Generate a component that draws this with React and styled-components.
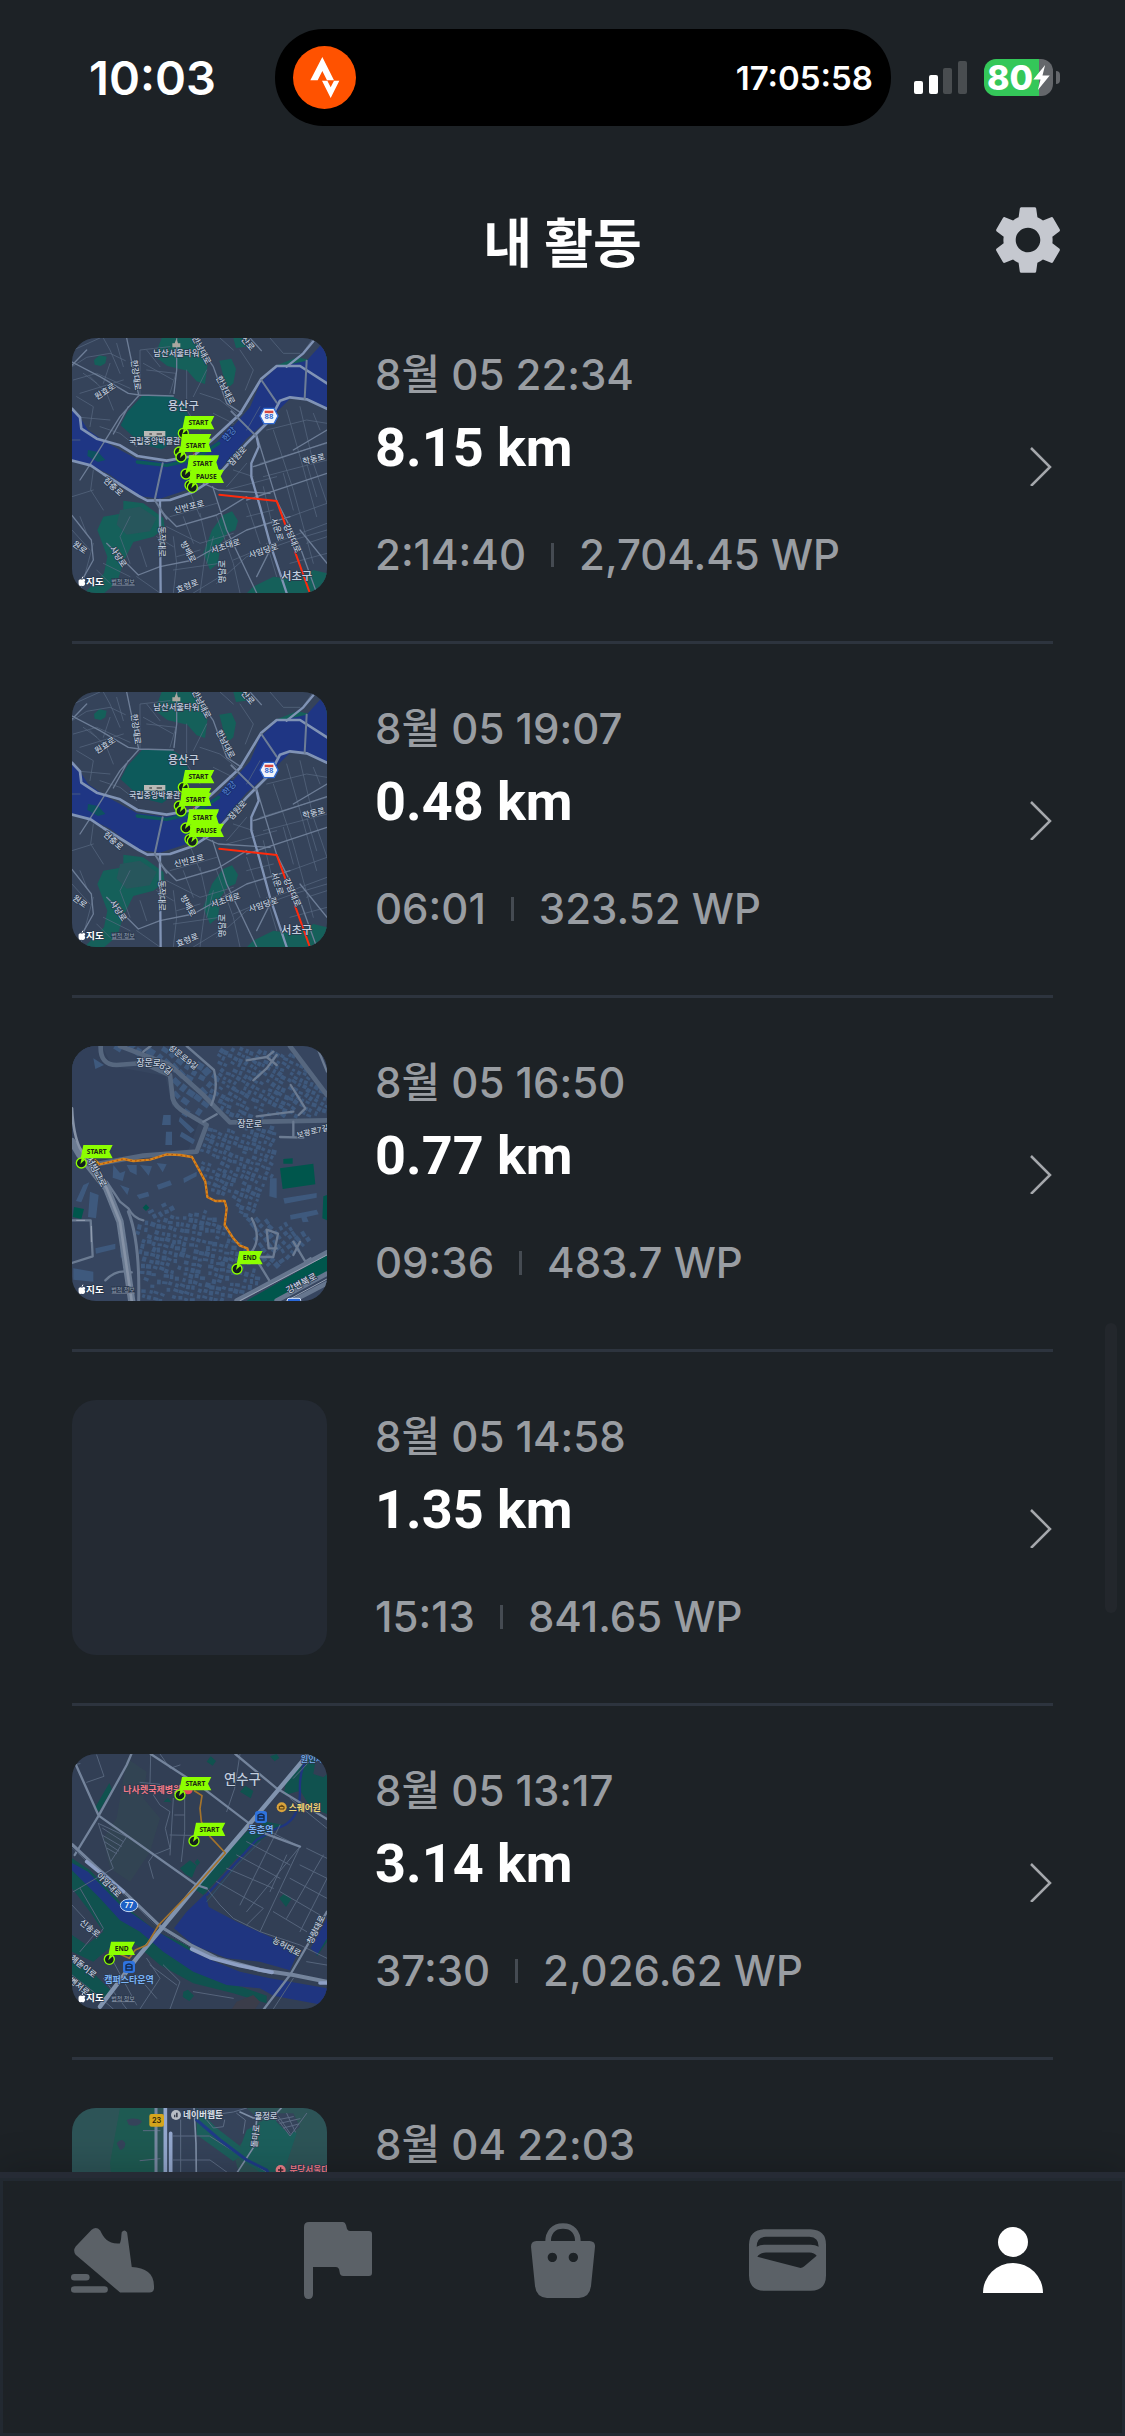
import React from "react";
import styled, { createGlobalStyle } from "styled-components";
import { MdSettings } from "react-icons/md";

const color = {
  bg: "#1d2226",
  panel: "#242a33",
  line: "#2d343e",
  muted: "#999da2",
  faint: "#5b6167",
  lime: "#8cff00",
  orange: "#ff5200",
  green: "#34c759",
};
const sans = `Inter, "Noto Sans CJK KR", sans-serif`;

const GlobalStyle = createGlobalStyle`
  * { box-sizing: border-box; }
  body { margin: 0; background: ${color.bg}; color: #fff; font-family: ${sans}; }
  h1, p, ul { margin: 0; padding: 0; }
  ul { list-style: none; }
  a { color: inherit; text-decoration: none; }
`;

const Screen = styled.div`
  position: relative;
  display: flex;
  flex-direction: column;
  height: 100vh;
  overflow: hidden;
`;

/* status bar */
const StatusBar = styled.div`
  display: grid;
  grid-template-columns: 275fr 616fr 234fr;
  align-items: center;
  flex: none;
  padding-top: 29px;
`;
const Clock = styled.time`
  padding-left: 30px;
  text-align: center;
  font-size: 47px;
  line-height: 56px;
  font-weight: 600;
`;
const Island = styled.div`
  display: flex;
  align-items: center;
  justify-content: space-between;
  height: 97px;
  padding: 0 18px;
  border-radius: 48px;
  background: #000;
`;
const Timer = styled.time`
  font-size: 33px;
  line-height: 40px;
  font-weight: 600;
`;
const StatusIcons = styled.div`
  display: flex;
  align-items: center;
  gap: 17px;
  padding-left: 23px;
`;
const Battery = styled.div`
  display: flex;
  align-items: center;
  gap: 3px;
`;
const BatteryBody = styled.div`
  display: flex;
  align-items: center;
  justify-content: center;
  width: 69px;
  height: 37px;
  border-radius: 12px;
  background: linear-gradient(90deg, ${color.green} 80%, #64676b 80%);
  font-size: 34px;
  line-height: 37px;
  font-weight: 800;
`;
const BatteryTip = styled.div`
  width: 4px;
  height: 13px;
  border-radius: 0 4px 4px 0;
  background: #64676b;
`;

/* header */
const Header = styled.header`
  display: grid;
  grid-template-columns: 1fr auto 1fr;
  align-items: center;
  flex: none;
  height: 164px;
  padding: 64px 56px 0;
`;
const Title = styled.h1`
  grid-column: 2;
  font-family: "Noto Sans CJK KR", sans-serif;
  font-size: 53px;
  line-height: 72px;
  font-weight: 600;
`;
const IconButton = styled.button`
  display: flex;
  justify-self: end;
  padding: 0;
  border: 0;
  background: none;
  color: #c5c8cf;
`;

/* list */
const List = styled.ul`
  flex: 1;
  min-height: 0;
  padding: 0 72px;
  overflow-y: auto;
  scrollbar-width: none;
`;
const Item = styled.li`
  border-bottom: 3px solid ${color.line};
`;
const Row = styled.a`
  display: flex;
  align-items: center;
  gap: 48px;
  padding: 48px 0;
`;
const Thumb = styled.div`
  flex: none;
  width: 255px;
  height: 255px;
  overflow: hidden;
  border-radius: 24px;
  background: ${color.panel};
  svg { display: block; }
`;
const Details = styled.div`
  flex: 1;
  display: flex;
  flex-direction: column;
  align-self: stretch;
  padding-top: 12px;
`;
const DateLine = styled.time`
  font-size: 42px;
  line-height: 50px;
  font-weight: 500;
  color: ${color.muted};
`;
const Distance = styled.strong`
  margin-top: 12px;
  font-family: Roboto, "Noto Sans CJK KR", sans-serif;
  font-size: 54px;
  line-height: 72px;
  font-weight: 700;
`;
const Meta = styled.div`
  display: flex;
  align-items: center;
  gap: 25px;
  margin-top: 46px;
  font-size: 42px;
  line-height: 50px;
  font-weight: 500;
  color: ${color.muted};
`;
const Divider = styled.span`
  width: 3px;
  height: 24px;
  background: #454b52;
`;
const ScrollThumb = styled.div`
  position: absolute;
  right: 8px;
  top: 54.3%;
  width: 12px;
  height: 290px;
  border-radius: 6px;
  background: #23272c;
`;

/* tab bar */
const TabBar = styled.nav`
  display: grid;
  grid-template-columns: repeat(5, 1fr);
  flex: none;
  height: 264px;
  border-top: 6px solid #262b35;
  box-shadow: 0 -4px 36px rgba(0, 0, 0, 0.2), inset 0 0 0 3px #222931;
  background: ${color.bg};
  position: relative;
`;
const Tab = styled.a`
  display: flex;
  align-items: center;
  justify-content: center;
  height: 164px;
  color: ${(p) => (p.$active ? "#fff" : color.faint)};
`;

/* ---------- map drawing ---------- */
const Roads = ({ d, c = "#61718a", w = 3 }) => (
  <path d={d} fill="none" stroke={c} strokeWidth={w} strokeLinejoin="round" strokeLinecap="round" />
);
const Label = ({ x, y, r = 0, s = 25, c = "#c3cede", w = 500, o = "#29374c", children }) => (
  <text
    x={x} y={y} transform={`rotate(${r} ${x} ${y})`} textAnchor="middle" dominantBaseline="central"
    fontFamily='Inter, "Noto Sans CJK KR", sans-serif' fontSize={s} fontWeight={w}
    fill={c} stroke={o} strokeWidth="4" paintOrder="stroke"
  >
    {children}
  </text>
);
const Pin = ({ x, y }) => (
  <g>
    <circle cx={x} cy={y} r="15" fill="#14201c" stroke={color.lime} strokeWidth="4" />
    <path d={`M${x - 3} ${y + 3} L${x + 1} ${y - 14} L${x + 11} ${y - 10}Z`} fill={color.lime} />
  </g>
);
const Flag = ({ x, y, w = 88, label }) => (
  <g>
    <path d={`M${x} ${y}h${w}l-10 20l10 20h${-w - 8}z`} fill={color.lime} />
    <text x={x + w / 2 - 4} y={y + 20} textAnchor="middle" dominantBaseline="central" fontFamily='"Noto Sans", sans-serif' fontSize="20" fontWeight="700" fill="#1c2a12">
      {label}
    </text>
  </g>
);
const MapCredit = ({ y }) => (
  <g>
    <path d={`M56 ${y - 2}q5-6 10-2q6-4 10 1q-5 5 0 11q-4 9-8 7q-4-2-8 0q-6-2-4-17zM65 ${y - 6}q0-6 5-8q0 6-5 8z`} fill="#fff" />
    <Label x={105} y={y} s={29} c="#fff" w={700}>지도</Label>
    <Label x={189} y={y + 2} s={18} c="#8793a5">법적 정보</Label>
    <path d={`M155 ${y + 13}h69`} stroke="#8793a5" strokeWidth="2" />
  </g>
);
const MapFrame = ({ y, label, children }) => (
  <svg width="255" height="255" viewBox={`36 ${y} 765 765`} role="img" aria-label={label}>
    {children}
  </svg>
);

const SeoulMap = () => (
  <MapFrame y={24} label="용산구">
    <rect x="36" y="24" width="765" height="765" fill="#35435a" />
    <g fill="#15605a">
      <path d="M305 24h90l30 28l18 50l-8 60l-25-8l-28-32l-60-14l-38-30z" />
      <path d="M478 92l36-6l14 30l-8 44l-16 14l-14-36z M520 24h44l-6 26l-30 4z" />
      <path d="M246 198l84-2l48 26l8 52l-20 40l-60 44l-62-16l-62-56l20-40z" fill="#0d5a5b" />
      <path d="M102 90l16-14l22 4l-4 20l-14 8l-18-4z M640 110l70 2l40 24l51 16v-80l-40 20l-50-10z" />
      <path d="M190 512l60 8l60 44l4 30l-34 26l-60 16l-30 60l-18 60l-40 34h-60l60-60l10-50l-30-80l18-40l60-10z" />
      <path d="M488 556l28-12l18 28l-8 28l-24 10l-20 30l-8 60l-24 20l-20-50l26-70z M640 740l70 10l50-30l41 10v59h-240l20-20z" />
    </g>
    <path d="M180 540l60-10l50 34l-20 40l-70 10l-30-30z" fill="#27565c" />
    <path d="M36 236L60 262L84 300L140 338L232 388L320 398L400 380L470 336L520 288L570 232L600 160L650 112L740 92L801 24V240L740 206L690 206L640 256L560 326L480 420L380 480L300 506L236 498L150 434L92 406L36 392Z" fill="#1f3684" />
    <path d="M84 360l30 6l22 24l-22 6l-32-18z" fill="#0d5260" />
    <Roads d="M232 396L320 406L402 388L476 340" c="#0d5a5b" w={10} />
    <Roads
      w={2}
      c="#5a6b84"
      d="M40 60L120 24M36 110L80 82L150 70L196 92M130 24L150 60L180 130M90 140L140 190L160 240M60 190L190 150M40 150L110 130L210 175M150 270L60 262M240 194V60L330 50M330 190L348 130L260 120M380 120V240L420 300M420 190L480 210L530 250M540 60L580 120L556 180M440 120L400 200M100 420L92 480L130 540M36 500L100 480M210 560L180 620L210 700M320 590L420 640L520 610M340 620L350 700L340 789M420 550L440 640L420 789M470 560L520 700L540 789M560 520L600 640M380 460L420 560M330 560L470 520M470 760L560 680L700 630L801 600M520 690L640 640L801 580M600 400L700 370L801 340M610 440L801 390M620 300L740 270L801 280M720 230L760 400L801 520M680 240L720 380L770 560M640 300L700 480L760 700M560 400L500 470M500 480L650 440M230 740L300 789M100 640L60 789M36 600L90 660M130 700L210 740M690 560L801 520M740 640L801 620M560 560L640 540M520 420L580 440M760 24L720 80M630 24L670 70L720 70M480 24L520 60M60 330L36 330M780 300L760 250M340 720L480 700M400 789L480 740M50 200L100 230L90 290M120 290L180 310L230 350M70 130L110 160M150 100L130 160M170 40L190 110M250 100L340 150M260 60L300 110M400 260L440 290M460 250L520 280M600 230L560 300M610 470L640 600M670 430L700 540M740 400L770 500M620 640L650 740M690 700L801 670M370 560L400 640M290 620L340 650M240 650L260 710M460 620L440 700M350 680L420 660M60 560L80 610M110 720L150 760"
    />
    <Roads
      w={4}
      c="#6d7d96"
      d="M36 106L80 60M36 96L120 140L205 190L238 195L340 198M238 195L180 260L90 404L60 450M200 24L236 195M160 312L205 230M400 24L460 110L500 220L545 250M350 24V120L342 190M570 24L604 62M36 556L94 630L100 690L72 740M300 540L350 590L470 555L560 500M458 470L500 600L590 789M560 510L801 430M300 710L400 690L560 600L690 560M235 735L300 710M140 640L235 735M590 315L650 512L720 650L770 789M590 740L640 640M700 360L801 300M580 410L801 338M720 600L801 700M430 460L475 480L630 490"
    />
    <Roads w={8} c="#8093b5" d="M36 236L60 262L64 296L110 326L180 346L232 378L320 392L400 378L456 330L540 252L604 146L650 108L720 108L801 160M36 392L92 406L130 432L236 498L262 512L330 510L400 486L470 440L560 340L630 270L660 212L690 202L740 208L801 236" />
    <Roads w={7} c="#8093b5" d="M680 110L730 70L760 34M590 320L596 350L574 400L574 440L600 530L630 640L680 789M300 510V570L302 789" />
    <Roads w={6} c="#6d7d96" d="M308 400L284 510L320 566M604 150L650 218M740 92L734 206M514 244L590 320" />
    <Roads w={3} c="#8b2f2b" d="M395 340L408 400L435 460" />
    <Roads w={6} c="#ff2a0c" d="M478 494L650 513L676 584M706 668L748 785" />
    <Roads w={3} c="#c43322" d="M676 584L706 668" />
    <path d="M349 26l5 14h7v12h-24V40h7z" fill="#aaa79f" />
    <rect x="252" y="303" width="64" height="17" fill="#b9b9b6" />
    <path d="M268 312h8M290 312h16" stroke="#555" strokeWidth="5" />
    <Label x={349} y={69} s={25}>남산서울타워</Label>
    <Label x={425} y={60} r={62}>한남대로</Label>
    <Label x={564} y={40} r={50}>산로</Label>
    <Label x={228} y={135} r={82}>한강대로</Label>
    <Label x={135} y={184} r={-33}>원효로</Label>
    <Label x={497} y={180} r={62}>한남대로</Label>
    <Label x={370} y={228} s={34}>용산구</Label>
    <Label x={284} y={333} s={24}>국립중앙박물관</Label>
    <Label x={508} y={313} r={-48} s={26} c="#527ecb" o="#142b68">한강</Label>
    <Label x={532} y={378} r={-48}>잠원로</Label>
    <Label x={761} y={387} r={-14}>학동로</Label>
    <Label x={160} y={470} r={42}>현충로</Label>
    <Label x={387} y={530} r={-14}>신반포로</Label>
    <Label x={175} y={680} r={56}>사당로</Label>
    <Label x={60} y={652} r={36}>원로</Label>
    <Label x={307} y={635} r={90}>동작대로</Label>
    <Label x={385} y={665} r={62}>방배로</Label>
    <Label x={497} y={648} r={-18}>서초대로</Label>
    <Label x={610} y={662} r={-18}>사임당로</Label>
    <Label x={652} y={598} r={72}>서운로</Label>
    <Label x={697} y={625} r={66}>강남대로</Label>
    <Label x={485} y={725} r={-90}>명달로</Label>
    <Label x={382} y={768} r={-22}>효령로</Label>
    <Label x={710} y={737} s={34}>서초구</Label>
    <path d="M600 258l12-23h30l12 23l-12 23h-30z" fill="#f1f4fb" stroke="#2f68cf" strokeWidth="4" />
    <rect x="614" y="242" width="26" height="8" fill="#d7483f" />
    <Label x={627} y={262} s={20} c="#2f68cf" w={800} o="#f1f4fb">88</Label>
    <Pin x={370} y={310} />
    <Flag x={375} y={258} label="START" />
    <Pin x={358} y={366} />
    <Pin x={363} y={381} />
    <path d="M366 312h88l-10 20l10 34h-94z" fill={color.lime} />
    <Flag x={368} y={326} w={86} label="START" />
    <Pin x={378} y={432} />
    <Pin x={390} y={466} />
    <Pin x={397} y={472} />
    <Flag x={394} y={419} w={98} label="PAUSE" />
    <path d="M387 376h90l-8 20l8 26h-94z" fill={color.lime} />
    <Flag x={388} y={380} w={88} label="START" />
    <MapCredit y={753} />
  </MapFrame>
);

const inside = (pts, x, y) => {
  let hit = false;
  for (let i = 0, j = pts.length - 1; i < pts.length; j = i++) {
    const [xi, yi] = pts[i];
    const [xj, yj] = pts[j];
    if (yi > y !== yj > y && x < ((xj - xi) * (y - yi)) / (yj - yi) + xi) hit = !hit;
  }
  return hit;
};
const houses = (pts, angle, step, seed) => {
  const out = [];
  let s = seed;
  const rnd = () => (s = (s * 16807) % 2147483647) / 2147483647;
  const a = (angle * Math.PI) / 180;
  for (let v = -900; v < 900; v += step)
    for (let u = -900; u < 900; u += step) {
      const x = 420 + u * Math.cos(a) - v * Math.sin(a) + (rnd() - 0.5) * 6;
      const y = 415 + u * Math.sin(a) + v * Math.cos(a) + (rnd() - 0.5) * 6;
      const w = step * (0.5 + rnd() * 0.4);
      const h = step * (0.45 + rnd() * 0.4);
      if (rnd() > 0.1 && inside(pts, x, y)) out.push({ x, y, w, h, r: angle + rnd() * 24 - 12 });
    }
  return out;
};
const blocks = [
  ...houses([[140, 33], [300, 33], [470, 110], [460, 200], [400, 260], [345, 200], [330, 120]], 38, 28, 11),
  ...houses([[470, 33], [690, 50], [801, 180], [801, 240], [530, 255], [440, 190], [475, 100]], 28, 17, 23),
  ...houses([[440, 280], [650, 275], [640, 420], [600, 500], [560, 560], [500, 480], [450, 470], [410, 360]], 20, 17, 37),
  ...houses([[230, 560], [440, 520], [500, 580], [570, 650], [600, 740], [500, 797], [250, 797]], 12, 18, 41),
  ...houses([[250, 520], [320, 490], [340, 520], [280, 560]], -25, 20, 53),
  ...houses([[560, 540], [660, 560], [760, 600], [700, 680], [620, 700]], 50, 20, 61),
];
const HillMap = () => (
  <MapFrame y={33} label="장문로">
    <rect x="36" y="33" width="765" height="765" fill="#36455f" />
    <path d="M36 33h90l30 60l160 30l20 90l80 50l-30 80l-160 20l-140 20l-50-60z" fill="#32405a" />
    <g fill="#3e597d">
      {blocks.map((b, i) => (
        <rect key={i} x={b.x - b.w / 2} y={b.y - b.h / 2} width={b.w} height={b.h} transform={`rotate(${b.r} ${b.x} ${b.y})`} />
      ))}
      <path d="M100 70l32 20l-26 12zM310 240h22v30h-26zM318 290h18v40h-20zM360 245l44 40l-12 10l-36-36zM365 290l40 24l-6 14l-40-24zM160 390l20 24l16-6l-8 30l-30-10zM200 390h30v30l-20-10zM240 390l36 4l-10 28zM290 384l30 4l-12 24zM180 450l28 10l-6 20zM230 480l34-10l4 14l-30 8zM290 450l40-14l6 14l-40 14zM370 430l40-20v14l-38 20zM70 450l18-8l-24 60l-16-4zM90 470l26 10l-8 70l-24-4zM106 640l60-14v16l-58 14zM180 630l22-6v40l-20 4zM40 700l60 10v30l-60-6zM670 490l100-16v14l-96 18zM630 430h20v60l-22-6zM690 540l80-16l6 14l-36 8l6 14l-18 2l-4-14l-32 6z" />
    </g>
    <g fill="#00564c">
      <path d="M660 400l100-14l6 62l-98 14zM670 372l28-2v16h-28zM42 516l30 6l-8 30l-26-6zM258 508l10 10l-10 10l-10-10zM790 484l11-4v76l-14-6z" />
      <path d="M560 797L801 660V720L660 797Z" />
    </g>
    <Roads w={14} c="#56677f" d="M122 33Q120 90 170 90L250 84L330 120L338 190Q344 215 380 235L440 270L410 350L250 362L118 386M180 33L330 90L430 180L510 262L801 256M690 33L801 180" />
    <Roads w={7} c="#6b7b92" d="M380 33L462 105Q476 160 454 210M430 260L470 238M560 76L620 66L650 90M580 136L620 100L650 60M620 66L640 50M692 150L736 220L716 240M590 244L700 230M660 306L730 308M700 260V306M575 550Q606 610 575 650L630 740M620 584L654 596L640 666H600M620 584L626 640H650M700 620L736 680L752 670M700 660L720 620M36 556H92L98 664L36 684M250 556Q220 550 205 520L180 500L140 440M136 736Q170 700 215 712M40 340L70 350M250 50L272 33M770 33L801 110" />
    <Roads w={22} c="#6b7b92" d="M36 320L60 360L140 460L180 560L215 797" />
    <Roads w={8} c="#8592a6" d="M36 220Q40 300 60 340L140 460L180 560L215 797" />
    <Roads w={9} c="#66768e" d="M205 530Q240 620 236 797" />
    <Roads w={14} c="#66768e" d="M530 797L801 652M650 797L801 716M700 797L801 744" />
    <Roads w={3} c="#97a2b4" d="M540 797L801 660M680 797L801 732M50 556H74M94 574V620" />
    <Roads w={7} c="#d9851b" d="M106 376L118 388L190 372L220 378L270 374L320 358L360 360L396 366L420 410L436 440L442 486L466 498L494 498L500 520L494 570L520 610L540 632L562 640L566 655" />
    <path d="M106 376L118 388L190 372L220 378L270 374L320 358L360 360L396 366L420 410L436 440L442 486L466 498L494 498L500 520L494 570L520 610L540 632L562 640" fill="none" stroke="#b4570f" strokeWidth="4" strokeDasharray="5 9" />
    <Label x={266} y={82} s={27}>장문로</Label>
    <Label x={318} y={100} r={38} s={27}>6길</Label>
    <Label x={370} y={66} r={38} s={24}>장문로9길</Label>
    <Label x={569} y={264} s={27}>장문로</Label>
    <Label x={758} y={290} r={-14} s={23}>보광로7길</Label>
    <Label x={110} y={410} r={62} s={27}>서빙고로</Label>
    <Label x={724} y={744} r={-28} s={27}>강변북로</Label>
    <rect x="682" y="790" width="40" height="12" rx="5" fill="#2867d8" stroke="#dce6fa" strokeWidth="3" />
    <Pin x={64} y={384} />
    <Flag x={70} y={330} label="START" />
    <Pin x={531} y={702} />
    <Flag x={538} y={648} w={70} label="END" />
    <MapCredit y={762} />
  </MapFrame>
);

const Station = ({ x, y }) => (
  <g>
    <rect x={x - 18} y={y - 18} width="36" height="36" rx="8" fill="#2f73de" />
    <path d={`M${x - 9} ${y + 9}v-14q9-8 18 0v14zM${x - 9} ${y}h18`} fill="none" stroke="#12284c" strokeWidth="4" />
  </g>
);
const CanalMap = () => (
  <MapFrame y={27} label="연수구">
    <rect x="36" y="27" width="765" height="765" fill="#323f55" />
    <path d="M200 40l60 40l-10 80l50 60l-30 100l-60 90l-60-40l-20-90l40-60z" fill="#35504f" opacity="0.3" />
    <g fill="#10524f">
      <path d="M36 340L90 376L180 470L290 560L380 600L470 700L620 752V775L520 745L400 715L300 660L230 600L170 590L100 650L36 620V570L80 600L130 560L90 500L36 430Z" />
      <path d="M680 100l60-73h30l-10 60l30 10l11-10v120l-50-20l-30-50l-50 14zM560 260l60-30l50 10l-60 40l-80 60l-100 110l-30-20zM104 190l44-76l8 20l-40 66zM36 650l60 30l60 60l-30 30l-90-70z" />
      <path d="M360 370l30-24l20 16l-14 36l-20-10zM404 352l8-10l8 10l-8 10zM658 460l14-14l22 16l-16 24zM540 140l16-18l24 16l-8 22zM440 50l12-16l16 14l-10 14zM310 170l14-12l10 14zM630 34l20-7l8 12l-14 10zM370 740l14-6l18 18l-14 16l-20-12zM760 600l41-70v60l-30 44z" />
    </g>
    <path d="M530 770l50-20l20 20l-20 30h-70z" fill="#3b3d4a" />
    <path d="M436 446L446 486L530 530L640 580L710 630L690 676L600 650L500 640L400 600L342 550L380 500Z" fill="#1f3580" />
    <path d="M36 354L84 380L180 480L290 558L380 612L440 640L540 680L630 700L801 730V782L640 752L600 730L500 720L400 680L310 620L240 560L180 526L120 460L36 376Z" fill="#1f3580" />
    <path d="M752 610l49-90v60l-30 50z" fill="#1f3580" />
    <Roads w={7} c="#1f3580" d="M746 27Q716 80 720 140Q720 230 650 250L590 284L440 450" />
    <Roads w={3} c="#56657c" d="M36 60L60 56M80 112L132 94L110 30M272 30L270 116M240 112L300 118L280 150L300 180L330 200L316 250L330 310L280 330L266 350L280 400M340 160L330 330M374 160V260L364 350M330 270L440 272M344 210H374M115 235L200 275L152 350L115 235M128 250L190 290M126 270L184 304M134 290L176 318M142 310L170 326M152 350L160 370L40 440M540 27L524 130L500 200M360 60L330 70L300 27M60 430L130 550L110 580M440 430L480 480L520 520L600 560L720 600L801 640M610 250L720 305L560 500M560 290L690 360M530 330L660 400M500 370L640 430M470 410L610 490L560 540M660 240L540 480M720 305L600 560M690 160L801 250M740 310L801 340M720 360L801 400M690 400L801 460M660 440L780 510M640 500L740 560M680 330L630 440M790 330L680 520M801 400L720 560M770 27L700 100M36 480L110 560L60 620M130 700L200 792M240 792L300 700L260 640M160 650L230 780M330 792L360 710L310 660M230 690L290 760M270 660L350 720M400 740L520 760M800 660L740 650M640 792L700 700M36 690L100 740L160 792" />
    <Roads w={7} c="#74849c" d="M48 60L116 212L200 60L214 27M116 212L44 330M116 212L410 420L440 430M272 27L430 130L600 260L720 305M526 27L650 130L801 222M801 500L690 690L612 792" />
    <Roads w={12} c="#74849c" d="M36 300L100 360L190 440L300 545L390 600L470 640L600 675L700 690L801 710" />
    <Roads w={3} c="#2f3d55" d="M36 306L100 366L190 446L300 551L390 606L470 646" />
    <Roads w={11} c="#8d9fc4" d="M80 350L190 440M395 612L450 638L540 662L636 682M780 714H801" />
    <Roads w={13} c="#8093ae" d="M745 27L600 200L412 420L305 550L230 640L120 785" />
    <Roads w={2} c="#32617a" d="M440 470L530 360L600 290" />
    <Roads w={5} c="#a4732b" d="M404 138L426 152L420 190L424 230L450 275L496 324L412 420L296 540L260 600L226 615L208 640L180 628" />
    <Label x={277} y={132} s={27} c="#f27a86" w={600}>나사렛국제병원</Label>
    <Label x={547} y={103} s={40}>연수구</Label>
    <Label x={756} y={42} s={25} c="#7ab3f5">원인재</Label>
    <Label x={603} y={252} s={27} c="#7ab3f5" w={600}>동춘역</Label>
    <Station x={603} y={216} />
    <circle cx="665" cy="187" r="15" fill="#d9a23c" />
    <path d="M658 184h14v8h-14zM661 184q4-8 8 0" fill="none" stroke="#51380f" strokeWidth="3" />
    <Label x={734} y={188} s={26} c="#f3d873" w={600}>스퀘어원</Label>
    <Label x={147} y={420} r={45} s={25}>아암대로</Label>
    <ellipse cx="207" cy="481" rx="26" ry="19" fill="#1d5fc4" stroke="#c8d8f2" strokeWidth="3" />
    <Label x={207} y={482} s={22} c="#fff" o="#1d5fc4" w={600}>77</Label>
    <Label x={90} y={550} r={38}>신송로</Label>
    <Label x={70} y={664} r={38}>해돋이로</Label>
    <Label x={58} y={724} r={38}>벤처로</Label>
    <Label x={680} y={605} r={28}>능허대로</Label>
    <Label x={768} y={554} r={-64}>청량대로</Label>
    <Label x={207} y={704} s={27} c="#7ab3f5" w={600}>캠퍼스타운역</Label>
    <Station x={207} y={666} />
    <circle cx="384" cy="134" r="14" fill="#e2485c" />
    <Pin x={360} y={150} />
    <Flag x={366} y={96} label="START" />
    <Pin x={402} y={288} />
    <Flag x={408} y={233} label="START" />
    <Pin x={148} y={643} />
    <Flag x={153} y={590} w={72} label="END" />
    <MapCredit y={757} />
  </MapFrame>
);

const ForestMap = () => (
  <MapFrame y={24} label="돌마로">
    <rect x="36" y="24" width="765" height="765" fill="#2d5457" />
    <path d="M180 24h110v200l30 565h-120l-30-400l-20-200z" fill="#1e5a52" />
    <path d="M318 24H560L600 60L560 110L520 160L540 230L520 789H318Z" fill="#35435a" />
    <path d="M410 24l60 60l90 70l-40 30l-110-80z M560 90l90-50l60 60l-30 90l-60 40l-90-60z" fill="#1c5f5c" />
    <path d="M640 40l60 0l20 40l-30 26l-40-40z" fill="#35435a" />
    <path d="M200 60q30-10 46 4q-10 20-40 10zM170 130q16-20 26 0q0 18-16 20z" fill="#35435a" />
    <Roads w={3} c="#5c6b83" d="M362 60V216M340 108H448L620 216M340 180H450L500 216M420 50L520 36L560 24M550 100L556 60L530 40M440 60L460 84L490 80L494 60M640 40L690 108L740 40M650 60L700 50M660 70L720 56M670 84L716 72M656 50L690 100M680 40L706 96M250 92H300M240 182L300 176" />
    <Roads w={5} c="#7e8ea6" d="M402 24L408 130L414 789M540 36L580 54L640 50L664 24M590 60L582 140L530 220" />
    <Roads w={9} c="#1f3b87" d="M410 60L480 120L560 180L620 210L660 280" />
    <Roads w={9} c="#7687a0" d="M288 24V789" />
    <Roads w={11} c="#93a7cd" d="M316 24V789M332 100V789" />
    <rect x="268" y="42" width="44" height="38" rx="6" fill="#d5a51c" />
    <Label x={290} y={61} s={22} c="#2a2208" o="#d5a51c" w={600}>23</Label>
    <circle cx="348" cy="45" r="15" fill="#b6bcc4" />
    <path d="M342 52v-8h4v8zM348 52v-14h5v14z" fill="#3b4250" />
    <Label x={429} y={46} s={26} c="#dde2ea" w={600}>네이버웹툰</Label>
    <Label x={618} y={49}>불정로</Label>
    <Label x={586} y={108} r={-84}>돌마로</Label>
    <circle cx="662" cy="210" r="15" fill="#ee7f88" />
    <path d="M662 202v16M654 210h16" stroke="#3a2430" strokeWidth="4" />
    <Label x={748} y={211} s={26} c="#f27a86" w={600}>분당서울대</Label>
  </MapFrame>
);

/* ---------- icons ---------- */
const Strava = () => (
  <svg width="63" height="63" viewBox="39 63 189 189" role="img" aria-label="Strava">
    <circle cx="133.500" cy="157.500" r="94.500" fill={color.orange} />
    <path d="M127 96L91 166H113L127 138L141 166H162ZM126 167L152 219L178 167H162L152 187L142 167Z" fill="#fff" />
  </svg>
);
const Signal = () => (
  <svg width="53" height="33" viewBox="0 0 53 33" aria-hidden="true">
    <g fill="#fff"><rect y="20" width="9" height="13" rx="2" /><rect x="15" y="14" width="9" height="19" rx="2" /></g>
    <g fill="#494d50"><rect x="29" y="7" width="9" height="26" rx="2" /><rect x="44" width="9" height="33" rx="2" /></g>
  </svg>
);
const Bolt = () => (
  <svg width="17" height="25" viewBox="464 158 50 76" aria-hidden="true">
    <path d="M500 158L464 202H486L478 234L514 190H492Z" fill="#fff" />
  </svg>
);
const Chevron = () => (
  <svg width="24" height="40" viewBox="0 0 24 40" aria-hidden="true">
    <path d="M2 2L21 21L2 40" fill="none" stroke="#a5a8ac" strokeWidth="2.5" />
  </svg>
);
const Shoe = () => (
  <svg width="83" height="65" viewBox="36 48 250 195" fill="currentColor">
    <path d="M98 53Q112 42 124 55C134 78 150 97 183 94C188 86 187 70 189 60Q197 50 205 61L219 165C260 167 286 184 286 222V230Q285 242 272 242H184L50 128Q41 116 50 103Z" />
    <rect x="36" y="186" width="56" height="20" rx="10" />
    <rect x="36" y="223" width="111" height="20" rx="10" />
  </svg>
);
const FlagIcon = () => (
  <svg width="68" height="77" viewBox="0 0 68 77" fill="currentColor">
    <path d="M5 0H39Q41 0 42 3L43 7Q44 9 46 9H65Q68 9 68 12V51Q68 54 65 54H39Q37 54 36 52L35 47Q34 45 32 45H9V72Q9 77 4.500 77Q0 77 0 72V5Q0 0 5 0Z" />
  </svg>
);
const Bag = () => (
  <svg width="64" height="75" viewBox="88 63 192 225" fill="currentColor">
    <path d="M139 122C139 90 156 72 184 72S229 90 229 122" fill="none" stroke="currentColor" strokeWidth="17" />
    <path fillRule="evenodd" d="M104 117H264Q281 118 280 134L268 252Q264 286 232 288H136Q104 286 100 252L88 134Q88 118 104 117ZM152 152a14 14 0 1 0 .1 0ZM215 152a14 14 0 1 0 .1 0Z" />
  </svg>
);
const Wallet = () => (
  <svg width="77" height="62" viewBox="745 87 231 185" fill="currentColor">
    <path fillRule="evenodd" d="M791 87H930Q976 89 976 133V226Q976 271 930 272H791Q746 271 745 226V133Q746 89 791 87ZM768 140Q778 134 790 134H930Q944 134 954 140Q954 111 926 110H796Q768 111 768 140ZM770 170Q776 158 796 157H926Q942 158 948 167L910 199Q904 204 897 203Z" />
  </svg>
);
const Person = () => (
  <svg width="60" height="66" viewBox="0 0 60 66" fill="currentColor">
    <circle cx="30" cy="15" r="15" />
    <path d="M0 66A30 30 0 0 1 60 66Z" />
  </svg>
);

const activities = [
  { date: "8월 05 22:34", km: "8.15 km", time: "2:14:40", wp: "2,704.45 WP", Map: SeoulMap },
  { date: "8월 05 19:07", km: "0.48 km", time: "06:01", wp: "323.52 WP", Map: SeoulMap },
  { date: "8월 05 16:50", km: "0.77 km", time: "09:36", wp: "483.7 WP", Map: HillMap },
  { date: "8월 05 14:58", km: "1.35 km", time: "15:13", wp: "841.65 WP" },
  { date: "8월 05 13:17", km: "3.14 km", time: "37:30", wp: "2,026.62 WP", Map: CanalMap },
  { date: "8월 04 22:03", Map: ForestMap },
];
const tabs = [
  { name: "러닝", Icon: Shoe },
  { name: "챌린지", Icon: FlagIcon },
  { name: "상점", Icon: Bag },
  { name: "지갑", Icon: Wallet },
  { name: "내 활동", Icon: Person, active: true },
];

export default function App() {
  return (
    <Screen>
      <GlobalStyle />
      <StatusBar>
        <Clock>10:03</Clock>
        <Island>
          <Strava />
          <Timer>17:05:58</Timer>
        </Island>
        <StatusIcons>
          <Signal />
          <Battery>
            <BatteryBody>80<Bolt /></BatteryBody>
            <BatteryTip />
          </Battery>
        </StatusIcons>
      </StatusBar>
      <Header>
        <Title>내 활동</Title>
        <IconButton aria-label="설정"><MdSettings size={82} /></IconButton>
      </Header>
      <List>
        {activities.map(({ date, km, time, wp, Map }) => (
          <Item key={date}>
            <Row href="#activity">
              <Thumb>{Map && <Map />}</Thumb>
              <Details>
                <DateLine>{date}</DateLine>
                {km && <Distance>{km}</Distance>}
                {wp && (
                  <Meta>
                    <span>{time}</span>
                    <Divider />
                    <span>{wp}</span>
                  </Meta>
                )}
              </Details>
              <Chevron />
            </Row>
          </Item>
        ))}
      </List>
      <ScrollThumb />
      <TabBar>
        {tabs.map(({ name, Icon, active }) => (
          <Tab key={name} href="#tab" aria-label={name} $active={active}>
            <Icon />
          </Tab>
        ))}
      </TabBar>
    </Screen>
  );
}
